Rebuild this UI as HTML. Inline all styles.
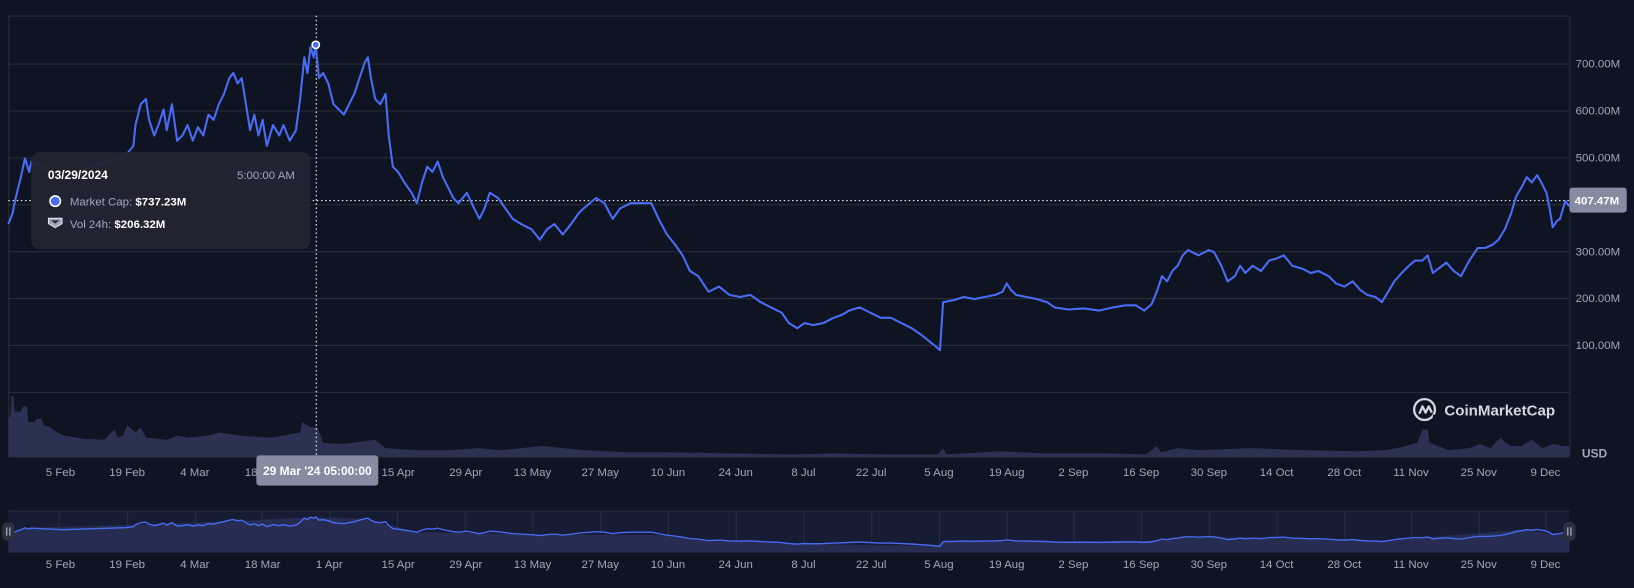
<!DOCTYPE html>
<html><head><meta charset="utf-8"><style>
html,body{margin:0;padding:0;background:#0e1421;width:1634px;height:583px;overflow:hidden}
#w{position:absolute;left:0;top:0;width:1568px;height:559px;transform:scale(1.0421);transform-origin:0 0;font-family:"Liberation Sans",sans-serif}
svg text{font-family:"Liberation Sans",sans-serif}
</style></head><body><div id="w">
<svg width="1568" height="559" viewBox="0 0 1568 559" xmlns="http://www.w3.org/2000/svg">
<defs>
<polyline id="ln" fill="none" vector-effect="non-scaling-stroke" points="8,215 12,205 15,190 20,170 24,152 28,165 30,155 60,170 90,160 120,150 128,140 130,120 135,100 140,95 143,115 148,130 152,120 157,105 160,125 165,100 170,135 175,130 180,120 185,135 190,122 195,130 200,110 205,115 210,100 215,90 220,75 224,70 228,80 232,75 236,100 240,125 244,110 248,130 252,115 256,140 262,120 268,130 272,120 278,135 284,125 288,95 292,55 295,70 298,45 301,55 303,43 306,75 310,70 315,80 320,100 325,105 330,110 335,100 340,90 345,75 350,60 353,55 356,75 360,95 365,100 370,90 373,130 377,160 382,165 388,175 395,185 400,195 405,175 410,160 415,165 420,155 425,170 430,180 435,190 440,195 448,185 455,200 460,210 465,200 470,185 478,190 485,200 492,210 500,215 510,220 518,230 525,220 532,215 540,225 548,215 555,205 560,200 566,195 572,190 580,195 588,210 595,200 605,195 615,195 625,195 632,210 640,225 648,235 655,245 662,260 670,265 680,280 690,275 700,283 710,285 720,283 730,290 740,295 750,300 757,310 765,315 772,310 780,312 790,310 800,305 808,302 815,298 825,295 835,300 845,305 855,305 865,310 875,315 885,322 895,330 902,336 905,290 915,288 925,285 935,287 945,285 955,283 962,280 966,272 970,278 975,283 985,285 995,287 1005,290 1012,295 1025,297 1040,296 1055,298 1068,295 1080,293 1090,293 1098,298 1105,292 1110,280 1115,265 1120,270 1125,260 1130,255 1135,245 1140,240 1150,245 1160,240 1165,242 1172,255 1178,270 1185,265 1190,255 1195,262 1202,255 1210,260 1218,250 1225,248 1232,245 1240,255 1250,258 1258,262 1265,260 1275,265 1282,272 1290,275 1298,270 1305,278 1312,283 1320,285 1326,290 1332,280 1338,270 1345,262 1352,255 1358,250 1365,250 1370,245 1375,262 1380,258 1388,252 1395,260 1402,265 1410,250 1418,238 1425,238 1432,235 1438,230 1444,220 1450,205 1455,188 1460,180 1465,170 1470,175 1475,168 1479,175 1484,185 1487,200 1490,218 1494,212 1497,210 1502,193 1506,198"/>
</defs>
<rect width="1568" height="559" fill="#0e1421"/>
<g stroke="#2a2e3b" stroke-width="1">
<line x1="8.5" y1="15" x2="8.5" y2="438"/>
<line x1="1506.5" y1="15" x2="1506.5" y2="438"/>
<line x1="8" y1="15.5" x2="1506" y2="15.5"/>
<line x1="8" y1="61.5" x2="1506" y2="61.5"/>
<line x1="8" y1="106.5" x2="1506" y2="106.5"/>
<line x1="8" y1="151.5" x2="1506" y2="151.5"/>
<line x1="8" y1="196.5" x2="1506" y2="196.5"/>
<line x1="8" y1="241.5" x2="1506" y2="241.5"/>
<line x1="8" y1="286.5" x2="1506" y2="286.5"/>
<line x1="8" y1="331.5" x2="1506" y2="331.5"/>
<line x1="8" y1="376.5" x2="1506" y2="376.5"/>
<line x1="8" y1="438.5" x2="1506" y2="438.5"/>
</g>
<polygon fill="#2a3152" points="8,438 8,400 10,400 11,380 13,380 14,395 20,395 22,390 26,390 27,405 33,405 35,402 40,402 42,408 48,410 55,415 62,418 80,421 100,422 110,412 113,420 118,418 122,408 130,415 135,410 140,420 160,422 170,418 180,420 200,418 210,415 230,418 260,420 288,415 290,405 298,410 305,410 310,425 330,426 360,422 370,430 400,432 430,432 460,430 480,432 500,430 520,428 560,432 600,434 640,434 700,435 760,436 800,435 850,436 900,436 905,430 908,436 960,433 1000,435 1060,435 1100,436 1110,428 1114,434 1130,430 1150,432 1200,430 1250,432 1300,433 1330,432 1345,429 1360,425 1365,412 1370,412 1372,425 1390,432 1410,430 1420,426 1430,430 1440,420 1445,425 1450,428 1460,428 1470,422 1480,430 1490,426 1500,428 1506,428 1506,438"/>
<line x1="303.5" y1="15" x2="303.5" y2="438" stroke="#ffffff" stroke-width="1" stroke-dasharray="1.5,2.5"/>
<line x1="8" y1="192.5" x2="1506" y2="192.5" stroke="#ffffff" stroke-width="1" stroke-dasharray="1.5,2.5"/>
<use href="#ln" stroke="#4a6cf5" stroke-width="2" stroke-linejoin="round"/>
<circle cx="303" cy="43" r="3.5" fill="#4a6cf5" stroke="#fff" stroke-width="1.5"/>
<g fill="#a1a7bb" font-size="11">
<text x="1512" y="65">700.00M</text>
<text x="1512" y="110">600.00M</text>
<text x="1512" y="155">500.00M</text>
<text x="1512" y="245">300.00M</text>
<text x="1512" y="290">200.00M</text>
<text x="1512" y="335">100.00M</text>
<text x="1518" y="439" font-weight="bold" font-size="11.5">USD</text>
</g>
<rect x="1506" y="180" width="55" height="24" rx="3" fill="#858ca2"/>
<text x="1511" y="196" fill="#fff" font-size="11" font-weight="bold">407.47M</text>
<g fill="#a1a7bb" font-size="11" text-anchor="middle">
<text x="58" y="457">5 Feb</text><text x="122" y="457">19 Feb</text><text x="187" y="457">4 Mar</text><text x="252" y="457">18 Mar</text>
<text x="382" y="457">15 Apr</text><text x="447" y="457">29 Apr</text><text x="511" y="457">13 May</text><text x="576" y="457">27 May</text><text x="641" y="457">10 Jun</text><text x="706" y="457">24 Jun</text><text x="771" y="457">8 Jul</text><text x="836" y="457">22 Jul</text><text x="901" y="457">5 Aug</text><text x="966" y="457">19 Aug</text><text x="1030" y="457">2 Sep</text><text x="1095" y="457">16 Sep</text><text x="1160" y="457">30 Sep</text><text x="1225" y="457">14 Oct</text><text x="1290" y="457">28 Oct</text><text x="1354" y="457">11 Nov</text><text x="1419" y="457">25 Nov</text><text x="1483" y="457">9 Dec</text>
</g>
<rect x="246" y="437" width="117" height="29" rx="3" fill="#858ca2"/>
<text x="304.5" y="456" fill="#fff" font-size="11.5" font-weight="bold" text-anchor="middle">29 Mar '24 05:00:00</text>
<rect x="8" y="490" width="1498" height="40" fill="#171c35"/>
<g stroke="#2a2e3b"><line x1="8" y1="490.5" x2="1506" y2="490.5"/>
<line x1="56.5" y1="490" x2="56.5" y2="530"/><line x1="122.5" y1="490" x2="122.5" y2="530"/><line x1="187.5" y1="490" x2="187.5" y2="530"/><line x1="251.5" y1="490" x2="251.5" y2="530"/><line x1="316.5" y1="490" x2="316.5" y2="530"/><line x1="381.5" y1="490" x2="381.5" y2="530"/><line x1="446.5" y1="490" x2="446.5" y2="530"/><line x1="511.5" y1="490" x2="511.5" y2="530"/><line x1="576.5" y1="490" x2="576.5" y2="530"/><line x1="641.5" y1="490" x2="641.5" y2="530"/><line x1="706.5" y1="490" x2="706.5" y2="530"/><line x1="771.5" y1="490" x2="771.5" y2="530"/><line x1="836.5" y1="490" x2="836.5" y2="530"/><line x1="901.5" y1="490" x2="901.5" y2="530"/><line x1="966.5" y1="490" x2="966.5" y2="530"/><line x1="1030.5" y1="490" x2="1030.5" y2="530"/><line x1="1095.5" y1="490" x2="1095.5" y2="530"/><line x1="1160.5" y1="490" x2="1160.5" y2="530"/><line x1="1225.5" y1="490" x2="1225.5" y2="530"/><line x1="1290.5" y1="490" x2="1290.5" y2="530"/><line x1="1354.5" y1="490" x2="1354.5" y2="530"/><line x1="1419.5" y1="490" x2="1419.5" y2="530"/><line x1="1483.5" y1="490" x2="1483.5" y2="530"/></g>
<g transform="translate(0,492) scale(1,0.0956)">
<polygon fill="#262c52" points="8,400 8,215 24,152 130,120 215,90 303,43 350,60 400,195 500,215 640,225 680,280 757,310 902,336 905,290 1005,290 1110,280 1140,240 1240,255 1326,290 1370,245 1465,170 1490,218 1506,198 1506,400"/>
<use href="#ln" stroke="#4a6cf5" stroke-width="1.3"/>
</g>
<rect x="2" y="501" width="12" height="18" rx="5" fill="#2b2f3e"/>
<rect x="1500" y="501" width="12" height="18" rx="5" fill="#2b2f3e"/>
<g stroke="#c7cbd6" stroke-width="1"><line x1="6.5" y1="506" x2="6.5" y2="514"/><line x1="9.5" y1="506" x2="9.5" y2="514"/><line x1="1504.5" y1="506" x2="1504.5" y2="514"/><line x1="1507.5" y1="506" x2="1507.5" y2="514"/></g>
<g fill="#a1a7bb" font-size="11" text-anchor="middle">
<text x="58" y="545">5 Feb</text><text x="122" y="545">19 Feb</text><text x="187" y="545">4 Mar</text><text x="252" y="545">18 Mar</text><text x="316" y="545">1 Apr</text><text x="382" y="545">15 Apr</text><text x="447" y="545">29 Apr</text><text x="511" y="545">13 May</text><text x="576" y="545">27 May</text><text x="641" y="545">10 Jun</text><text x="706" y="545">24 Jun</text><text x="771" y="545">8 Jul</text><text x="836" y="545">22 Jul</text><text x="901" y="545">5 Aug</text><text x="966" y="545">19 Aug</text><text x="1030" y="545">2 Sep</text><text x="1095" y="545">16 Sep</text><text x="1160" y="545">30 Sep</text><text x="1225" y="545">14 Oct</text><text x="1290" y="545">28 Oct</text><text x="1354" y="545">11 Nov</text><text x="1419" y="545">25 Nov</text><text x="1483" y="545">9 Dec</text>
</g>
<g transform="translate(1367,393)">
<circle r="10" fill="none" stroke="#d5d8e0" stroke-width="2.2"/>
<path d="M-5,4 L-2,-3 L1,3 L4,-3 L7,3" fill="none" stroke="#d5d8e0" stroke-width="2.2" stroke-linejoin="round"/>
</g>
<rect x="1375" y="398" width="8" height="8" fill="#0e1421"/>
<text x="1386" y="398.5" fill="#d5d8e0" font-size="14.5" font-weight="bold">CoinMarketCap</text>
<rect x="30" y="146" width="268" height="93" rx="8" fill="#222531" opacity="0.97"/>
<text x="46" y="172" fill="#fff" font-size="11.5" font-weight="bold">03/29/2024</text>
<text x="283" y="172" fill="#a1a7bb" font-size="11" text-anchor="end">5:00:00 AM</text>
<circle cx="53" cy="193" r="5" fill="#4a6cf5" stroke="#fff" stroke-width="1.5"/>
<text x="67" y="197" font-size="11"><tspan fill="#a1a7bb">Market Cap: </tspan><tspan fill="#fff" font-weight="bold">$737.23M</tspan></text>
<path d="M46.5,209.5 h13 v5 l-6.5,4 l-6.5,-4 z" fill="#a1a7bb" stroke="#e5e7ee" stroke-width="1"/>
<path d="M49,211.5 h8 l-4,3 z" fill="#222531"/>
<text x="67" y="219" font-size="11"><tspan fill="#a1a7bb">Vol 24h: </tspan><tspan fill="#fff" font-weight="bold">$206.32M</tspan></text>
</svg>
</div></body></html>
